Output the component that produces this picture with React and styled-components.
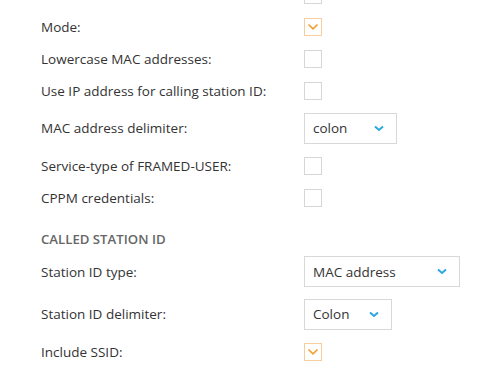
import styled, { createGlobalStyle } from 'styled-components'

const GlobalStyle = createGlobalStyle`
  html, body {
    margin: 0;
    padding: 0;
    background: #fff;
    overflow: hidden;
  }
  body {
    font-family: "Open Sans", "Noto Sans", sans-serif;
    color: #333;
  }
`

const Form = styled.div`
  margin-top: -21px;
  padding-left: 41px;
  display: flex;
  flex-direction: column;
`

const Row = styled.div`
  display: grid;
  grid-template-columns: 263px 1fr;
  align-items: center;
  height: ${p => (p.$tall ? 42.5 : 32)}px;
`

const Label = styled.div`
  font-size: 13.5px;
  line-height: 18px;
  color: #333;
  white-space: nowrap;
`

const Heading = styled.div`
  font-size: 13.2px;
  font-weight: 600;
  color: #666;
  line-height: 17px;
  padding-top: 17px;
  height: 37px;
  box-sizing: border-box;
`

const Box = styled.div`
  width: 18px;
  height: 18px;
  box-sizing: border-box;
  border: 1px solid ${p => (p.$checked ? '#f4cf9c' : '#d6d6d6')};
  background: #fff;
  display: flex;
  align-items: center;
  justify-content: center;
`

const Select = styled.div`
  width: ${p => p.$width}px;
  height: 31px;
  box-sizing: border-box;
  border: 1px solid #d8d8d8;
  background: #fff;
  display: flex;
  align-items: center;
  justify-content: space-between;
  padding: 0 12px 0 8px;
  font-size: 13.5px;
  color: #333;
`

function Checkbox({ checked }) {
  return (
    <Box $checked={checked}>
      {checked && (
        <svg width="12" height="8" viewBox="0 0 12 8">
          <polyline points="1.5,1.5 6,5.8 10.5,1.5" fill="none" stroke="#f0a030" strokeWidth="1.7" />
        </svg>
      )}
    </Box>
  )
}

function Dropdown({ value, width }) {
  return (
    <Select $width={width}>
      <span>{value}</span>
      <svg width="10" height="7" viewBox="0 0 10 7">
        <polyline points="1,1.5 5,5 9,1.5" fill="none" stroke="#2aa7df" strokeWidth="2" />
      </svg>
    </Select>
  )
}

const rows = [
  { label: 'Use MDS:', check: false },
  { label: 'Mode:', check: true },
  { label: 'Lowercase MAC addresses:', check: false },
  { label: 'Use IP address for calling station ID:', check: false },
  { label: 'MAC address delimiter:', select: 'colon', width: 93 },
  { label: 'Service-type of FRAMED-USER:', check: false },
  { label: 'CPPM credentials:', check: false },
  { heading: 'CALLED STATION ID' },
  { label: 'Station ID type:', select: 'MAC address', width: 156 },
  { label: 'Station ID delimiter:', select: 'Colon', width: 88 },
  { label: 'Include SSID:', check: true },
]

export default function App() {
  return (
    <>
      <GlobalStyle />
      <Form>
        {rows.map((r, i) =>
          r.heading ? (
            <Heading key={i}>{r.heading}</Heading>
          ) : (
            <Row key={i} $tall={!!r.select}>
              <Label>{r.label}</Label>
              {r.select ? <Dropdown value={r.select} width={r.width} /> : <Checkbox checked={r.check} />}
            </Row>
          )
        )}
      </Form>
    </>
  )
}
